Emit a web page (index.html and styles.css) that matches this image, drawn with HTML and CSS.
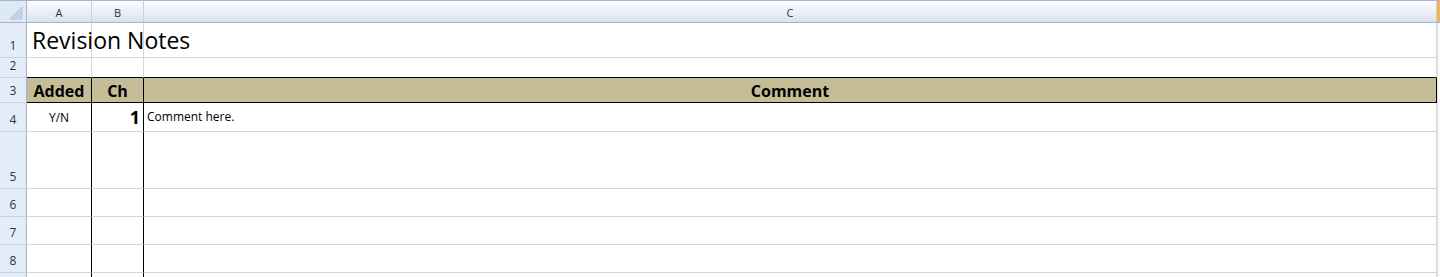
FILE: index.html
```html
<!DOCTYPE html>
<html lang="en">
<head>
    <meta charset="UTF-8">
    <title>Revision Notes</title>
    <link rel="stylesheet" href="styles.css">
</head>
<body>
    <div class="sheet">
        <!-- column headers -->
        <div class="corner">
            <svg width="26" height="22" viewBox="0 0 26 22">
                <polygon points="22,6 22,18 10,18" fill="#c2d1e6" stroke="#b3c5de" stroke-width="1"/>
            </svg>
        </div>
        <div class="col-head">A</div>
        <div class="col-head">B</div>
        <div class="col-head">C</div>
        <div class="col-head edge"></div>

        <!-- row 1 -->
        <div class="row-head">1</div>
        <div class="cell title">Revision Notes</div>
        <div class="cell"></div>
        <div class="cell"></div>
        <div class="strip"></div>

        <!-- row 2 -->
        <div class="row-head">2</div>
        <div class="cell band-top"></div>
        <div class="cell band-top"></div>
        <div class="cell band-top"></div>
        <div class="strip"></div>

        <!-- row 3 -->
        <div class="row-head">3</div>
        <div class="cell band ruled">Added</div>
        <div class="cell band ruled">Ch</div>
        <div class="cell band ruled">Comment</div>
        <div class="strip"></div>

        <!-- row 4 -->
        <div class="row-head">4</div>
        <div class="cell ruled center">Y/N</div>
        <div class="cell ruled num">1</div>
        <div class="cell text">Comment here.</div>
        <div class="strip"></div>

        <div class="row-head">5</div>
        <div class="cell ruled"></div>
        <div class="cell ruled"></div>
        <div class="cell"></div>
        <div class="strip"></div>

        <div class="row-head">6</div>
        <div class="cell ruled"></div>
        <div class="cell ruled"></div>
        <div class="cell"></div>
        <div class="strip"></div>

        <div class="row-head">7</div>
        <div class="cell ruled"></div>
        <div class="cell ruled"></div>
        <div class="cell"></div>
        <div class="strip"></div>

        <div class="row-head">8</div>
        <div class="cell ruled"></div>
        <div class="cell ruled"></div>
        <div class="cell"></div>
        <div class="strip"></div>

        <!-- row 9 is only a sliver at the bottom edge -->
        <div class="row-head"></div>
        <div class="cell ruled"></div>
        <div class="cell ruled"></div>
        <div class="cell"></div>
        <div class="strip"></div>
    </div>
</body>
</html>
```

FILE: styles.css
```css
/* spreadsheet colours */
:root {
    --grid: #d5d5de;
    --head-border: #9eb6ce;
    --row-head-bg: #e4ecf7;
    --band: #c4bd97;
    --ink: #000;
    --head-ink: #2a3340;
    --font: "Open Sans", "Noto Sans", Arial, sans-serif;
}

* {
    margin: 0;
    padding: 0;
    box-sizing: border-box;
}

body {
    background: #fff;
    font-family: var(--font);
    color: var(--ink);
    overflow: hidden;
}

.sheet {
    display: grid;
    grid-template-columns: 27px 65px 52px 1293px 3px;
    grid-template-rows: 23px 35px 20px 25px 29px 57px 28px 28px 28px 40px;
    height: 277px;
    overflow: hidden;
}

/* header row */
.corner {
    background: #dfe8f5;
    border-top: 1px solid var(--head-border);
    border-right: 1px solid var(--head-border);
    border-bottom: 1px solid var(--head-border);
}
.corner svg {
    display: block;
}

.col-head {
    display: flex;
    align-items: center;
    justify-content: center;
    padding-top: 2px;
    background: linear-gradient(#f9fbfd, #eaeff6 55%, #d9e1ec);
    border-top: 1px solid var(--head-border);
    border-right: 1px solid #c5d1e0;
    border-bottom: 1px solid var(--head-border);
    font-size: 11px;
    color: var(--head-ink);
}
.col-head.edge {
    background: #f5b453;
    border-right: none;
}

.row-head {
    display: flex;
    align-items: flex-end;
    justify-content: center;
    padding-bottom: 3px;
    background: var(--row-head-bg);
    border-right: 1px solid var(--head-border);
    border-bottom: 1px solid #c5d1e0;
    font-size: 12px;
    color: var(--head-ink);
}

/* cells */
.cell {
    display: flex;
    align-items: flex-end;
    border-right: 1px solid var(--grid);
    border-bottom: 1px solid var(--grid);
    white-space: nowrap;
    overflow: hidden;
}

.strip {
    border-left: 1px solid #e1e4ea;
    background: #fafafa;
}

.title {
    overflow: visible;
    padding: 0 0 2px 5px;
    font-size: 23px;
    line-height: 30px;
}

.band-top {
    border-bottom: 1px solid var(--ink);
}

.band {
    justify-content: center;
    align-items: center;
    background: var(--band);
    border-bottom: 1px solid var(--ink);
    font-weight: 700;
    font-size: 16px;
    padding-top: 1px;
}

.ruled {
    border-right: 1px solid var(--ink);
}

.center {
    justify-content: center;
    align-items: flex-start;
    padding-top: 6px;
    font-size: 12px;
}

.num {
    justify-content: flex-end;
    align-items: flex-start;
    padding: 2px 3px 0 0;
    font-size: 18px;
    font-weight: 700;
    line-height: 24px;
}

.text {
    align-items: flex-start;
    padding: 5px 0 0 3px;
    font-size: 12px;
}
```
